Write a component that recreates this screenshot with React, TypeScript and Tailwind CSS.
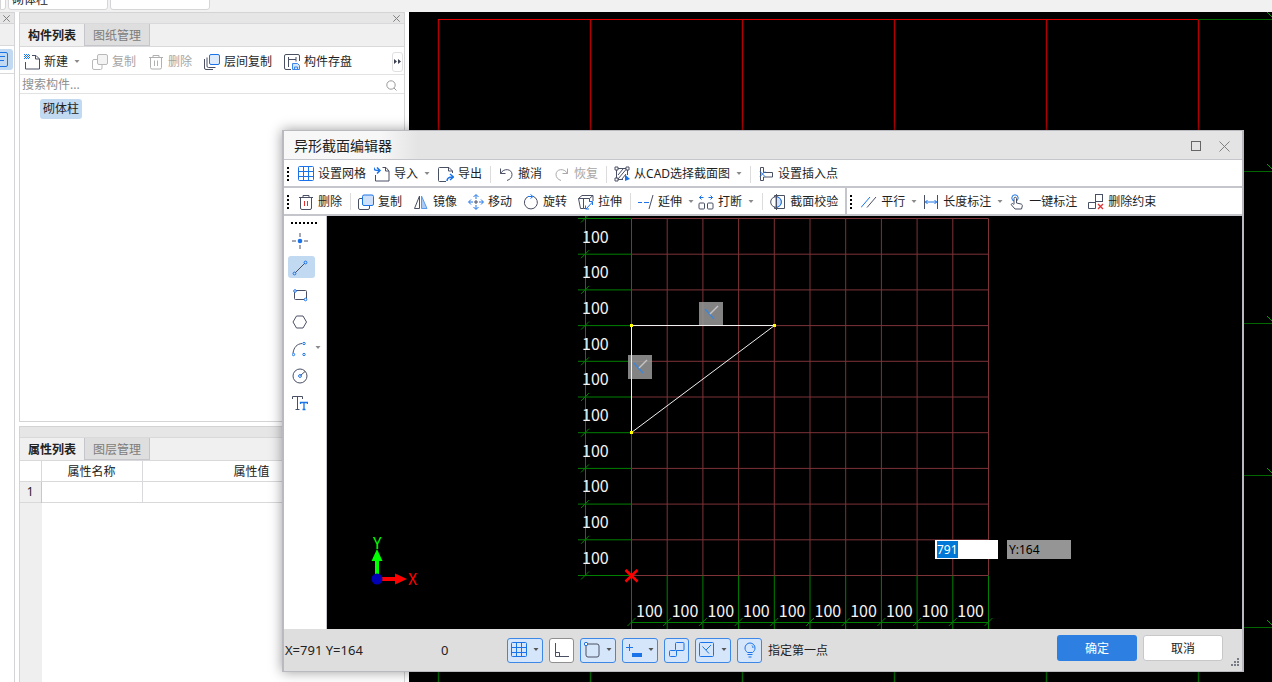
import { useEffect, useRef, type ReactNode } from "react";

const STEP = 35.7;
const cells = Array.from({ length: 10 }, (_, i) => i);
const ticks = Array.from({ length: 11 }, (_, i) => i);

const slate = "#4a5064";
const blue = "#1a73e8";

function Icon({ children, color = slate }: { children: ReactNode; color?: string }) {
  return (
    <svg width="16" height="16" viewBox="0 0 16 16" fill="none" stroke={color} className="shrink-0" aria-hidden="true">
      {children}
    </svg>
  );
}

const icons = {
  newDoc: (
    <Icon>
      <path d="M8 1.5h4l3.5 3.5v10h-14V8M11.500 1.500V5h4" />
      <path d="M0 .5h6M0 2.500h6M0 4.500h6" stroke={blue} strokeDasharray="1 1" />
      <path d="M1 1.500h5M1 3.500h5" stroke={blue} strokeDasharray="1 1" />
    </Icon>
  ),
  copyGray: (
    <Icon color="#b9b9b9">
      <path d="M5 5.500H2A1.500 1.500 0 0 0 .5 7v7A1.500 1.500 0 0 0 2 15.500h6.500A1.500 1.500 0 0 0 10 14v-3" />
      <rect x="5.500" y=".5" width="10" height="10" rx="1.500" fill="#f3f3f3" />
    </Icon>
  ),
  trashGray: (
    <Icon color="#b0b0b0">
      <path d="M1 3.500h14M5 3V1.500h6V3M2.500 4v9.500a1.500 1.500 0 0 0 1.500 1.500h8a1.500 1.500 0 0 0 1.500-1.500V4M6.500 6.500v5.500M9.500 6.500v5.500" />
    </Icon>
  ),
  trash: (
    <Icon>
      <path d="M1 3.500h14M5 3V1.500h6V3M2.500 4v10a1.500 1.500 0 0 0 1.500 1.500h8a1.500 1.500 0 0 0 1.500-1.500V4" />
      <path d="M6.500 7v5M9.500 7v5" stroke="#e03030" />
    </Icon>
  ),
  layers: (
    <Icon>
      <path d="M.5 5v9a1.500 1.500 0 0 0 1.500 1.500h7M3 3.500V12a1.500 1.500 0 0 0 1.500 1.500h7" />
      <rect x="5.500" y=".5" width="10" height="10" rx="1.500" stroke={blue} fill="#dceafc" />
    </Icon>
  ),
  store: (
    <Icon>
      <path d="M7 15.500H2A1.500 1.500 0 0 1 .5 14V2A1.500 1.500 0 0 1 2 .5h12A1.500 1.500 0 0 1 15.500 2v5M4.500 3v10M4.500 5.500H12V7.500M12 3v2.500" />
      <path d="M8.500 9.500h5l2 2v4h-7z" stroke="#3b86ea" fill="#d6e7fc" />
      <path d="M10.500 15v-2h3v2" stroke="#3b86ea" />
    </Icon>
  ),
  grid: (
    <Icon color={blue}>
      <rect x=".5" y=".5" width="15" height="14" rx="1" />
      <path d="M5.500 1v14M10.500 1v14M.5 5.500h15M.5 10.500h15" />
    </Icon>
  ),
  importIcon: (
    <Icon>
      <path d="M8.500 1.500H12l3 3.500v10H1.500V9M11.500 1.500V5H15" />
      <path d="M0 1.500c0 3 2 3 5 3M3 1.500l3 3-3 3" stroke={blue} strokeWidth="1.500" />
    </Icon>
  ),
  exportIcon: (
    <Icon>
      <path d="M8 15.500H1.500A1 1 0 0 1 .5 14.500v-12a1 1 0 0 1 1-1H11L14.500 5v2M10.500 1.500V5h4" />
      <path d="M9 15c0-3 2-4 5.500-4M12 8l3.500 3-3.500 3" stroke={blue} strokeWidth="1.500" />
    </Icon>
  ),
  undo: (
    <Icon>
      <path d="M2.500 2.500v5h5M2.500 7.500C6 1.500 14 3 14 8.500c0 3-2 5-5 6" />
    </Icon>
  ),
  redo: (
    <Icon color="#a9a9a9">
      <path d="M13.500 2.500v5h-5M13.500 7.500C10 1.500 2 3 2 8.500c0 3 2 5 5 6" />
    </Icon>
  ),
  cad: (
    <Icon>
      <path d="M2.500 2.500h11M2.500 2.500v11M13.500 2.500V9M2.500 13.500H9" />
      <path d="M1 1h3v3H1zM12 1h3v3h-3zM1 12h3v3H1z" fill="#fff" />
      <path d="M4 9l5-6M4 13l8-9.500M8 13l4-5" />
      <path d="M11 8.500l5 4.500-5 2z" stroke="none" fill={blue} />
    </Icon>
  ),
  insertPoint: (
    <Icon>
      <path d="M4 1.500H2.500v13H5.500v-3.500H14.500V6.500H5.500v-5H4" />
      <path d="M2 5.500l5 5M7 5.500l-5 5" stroke={blue} />
    </Icon>
  ),
  copyBlue: (
    <Icon>
      <path d="M5 4.500H2A1.500 1.500 0 0 0 .5 6v8A1.500 1.500 0 0 0 2 15.500h8a1.500 1.500 0 0 0 1.500-1.500v-2" />
      <rect x="4.500" y="1" width="11" height="10.500" rx="1.500" stroke={blue} fill="#cfe1fa" />
    </Icon>
  ),
  mirror: (
    <Icon>
      <path d="M6.500 2v12.500H1.500z" />
      <path d="M8.500 2v12.500H14z" stroke="#5b9bea" fill="#a9cbf6" />
    </Icon>
  ),
  move: (
    <Icon color={blue}>
      <path d="M8 1v4M8 11v4M1 8h4M11 8h4" />
      <path d="M8 6v4M6 8h4" stroke={slate} />
      <path d="M5.500 3L8 .5 10.500 3M5.500 13L8 15.500 10.500 13M3 5.500L.5 8 3 10.500M13 5.500L15.500 8 13 10.500" />
    </Icon>
  ),
  rotate: (
    <Icon>
      <path d="M10 2.300a6.500 6.500 0 1 1-4.500.1" />
      <path d="M5 2.500h4M7.500 .5l2.500 2-2.500 2" stroke={blue} />
    </Icon>
  ),
  stretch: (
    <Icon>
      <path d="M.5 4.500L4 1.500h11l-3.500 3zM.5 4.500l2 10h3V4.500M11.500 4.500V7M15 1.500V7M5.500 14.500h2" />
      <path d="M8 15l6.500-7M11 7.500h3.500V11M7.500 11.500V15H11" stroke={blue} />
    </Icon>
  ),
  extend: (
    <Icon>
      <path d="M0 8.500h4M6 8.500h5" stroke={blue} />
      <path d="M11 15l4-14" />
    </Icon>
  ),
  breakIcon: (
    <Icon>
      <rect x="1" y="9" width="5.500" height="6" rx="1" />
      <rect x="9.500" y="9" width="5.500" height="6" rx="1" />
      <path d="M1.500 3.500h4M3.500 1.500l-2 2 2 2M14.500 3.500h-4M12.500 1.500l2 2-2 2" stroke={blue} />
    </Icon>
  ),
  verify: (
    <Icon>
      <path d="M4.500 12.500v2h10v-13h-10v2" />
      <circle cx="6" cy="8" r="5.300" fill="#fff" />
      <path d="M6 2.700a5.300 5.300 0 0 1 0 10.600z" stroke={blue} fill="#cfe1fa" />
      <path d="M6.500 0v16" />
    </Icon>
  ),
  parallel: (
    <Icon>
      <path d="M0 13.500L9 3" stroke={blue} />
      <path d="M6 13.500L15 3" />
    </Icon>
  ),
  length: (
    <Icon>
      <path d="M1.500 1v14M14.500 1v14" />
      <path d="M2 8h12M4.500 6L2.500 8l2 2M11.500 6l2 2-2 2" stroke={blue} />
    </Icon>
  ),
  touch: (
    <Icon>
      <circle cx="6" cy="4" r="3.200" stroke={blue} />
      <path d="M5 10V4.500a1.200 1.200 0 0 1 2.500 0V9l4.500 1c1 .3 1.500 1 1.300 2L12.500 15H6L2.500 11c-.8-1 .8-2 1.500-1.200l1 1" fill="#fff" />
    </Icon>
  ),
  delConstraint: (
    <Icon>
      <rect x="7.500" y=".5" width="7" height="7" />
      <path d="M8 8.500H.5v6h7V8" />
      <path d="M10 10l5 5M15 10l-5 5" stroke="#e03030" strokeWidth="1.300" />
    </Icon>
  ),
  point: (
    <Icon>
      <path d="M8 0v4M8 12v4M0 8h4M12 8h4" />
      <circle cx="8" cy="8" r="2.300" fill={blue} stroke="none" />
    </Icon>
  ),
  line: (
    <Icon>
      <path d="M3 13L13 3" />
      <circle cx="2.500" cy="13.500" r="1.400" stroke={blue} />
      <circle cx="13.500" cy="2.500" r="1.400" stroke={blue} />
    </Icon>
  ),
  rect: (
    <Icon>
      <rect x="2.500" y="3.500" width="12" height="9" rx="1" />
      <circle cx="3" cy="4" r="1.300" stroke={blue} fill="#fff" />
      <circle cx="13.500" cy="12.500" r="1.300" stroke={blue} fill="#fff" />
    </Icon>
  ),
  hexagon: (
    <Icon>
      <path d="M4.500 2h6.500l3.500 6-3.500 6H4.500L1 8z" />
    </Icon>
  ),
  arc: (
    <Icon>
      <path d="M1 12C2 6 5 3 10 2.500" />
      <circle cx="1.500" cy="13.500" r="1.200" stroke={blue} />
      <circle cx="12" cy="2.500" r="1.200" stroke={blue} />
      <circle cx="12" cy="13.500" r="1.200" stroke={blue} />
    </Icon>
  ),
  circle: (
    <Icon>
      <circle cx="8" cy="8" r="7" />
      <path d="M8.500 7.500L13 3.500" />
      <circle cx="8" cy="8" r="1.400" stroke={blue} />
    </Icon>
  ),
  text: (
    <Icon>
      <path d="M.5 4V1.500h10V4M5.500 1.500v13M3.500 14.500h4" />
      <path d="M8.500 9V7.500h7V9M12 7.500v7M10.500 14.500h3" stroke={blue} strokeWidth="1.300" />
    </Icon>
  ),
  ortho: (
    <Icon>
      <path d="M1.500 1v13.500H15M1.500 10.500h4v4" />
    </Icon>
  ),
  snap: (
    <Icon>
      <rect x="2" y="2" width="13" height="13" rx="2" />
      <circle cx="2" cy="2" r="1.700" stroke={blue} fill="#fff" />
    </Icon>
  ),
  dynInput: (
    <Icon color={blue}>
      <path d="M0 5.500h7M3.500 2v7" />
      <rect x="6" y="11" width="10" height="4" fill={blue} stroke="none" />
    </Icon>
  ),
  constraint: (
    <Icon color={blue}>
      <rect x="6.500" y=".5" width="8.500" height="8" rx="1" />
      <path d="M6.500 8.500H1.500a1 1 0 0 0-1 1v4a1 1 0 0 0 1 1h5a1 1 0 0 0 1-1v-5" />
    </Icon>
  ),
  perpendicular: (
    <Icon color={blue}>
      <rect x=".5" y=".5" width="14" height="14" rx="1" />
      <path d="M3.500 4.500l6.500 7M7 8l5-5" />
    </Icon>
  ),
  bulb: (
    <Icon color={blue}>
      <path d="M5.500 10.500C4 9.500 3 8 3 6a5 5 0 0 1 10 0c0 2-1 3.500-2.500 4.500zM5.500 12.500h5M6.500 15h3M10 3.500c.8.800 1 1.500 1 2.500" />
    </Icon>
  ),
};

function Caret({ className = "text-[#8a8a8a]" }: { className?: string }) {
  return (
    <svg width="6" height="4" viewBox="0 0 6 4" className={`shrink-0 ${className}`} aria-hidden="true">
      <path d="M.5 0h5L3 3z" fill="currentColor" />
    </svg>
  );
}

function CloseX({ size = 7 }: { size?: number }) {
  return (
    <svg width={size} height={size} viewBox="0 0 7 7" stroke="#808080" aria-hidden="true">
      <path d="M.3.3l6.400 6.400M6.700.3L.3 6.700" vectorEffect="non-scaling-stroke" />
    </svg>
  );
}

interface ToolButtonProps {
  icon: ReactNode;
  label: string;
  caret?: boolean;
  disabled?: boolean;
}

function ToolButton({ icon, label, caret, disabled }: ToolButtonProps) {
  return (
    <button
      type="button"
      disabled={disabled}
      className="flex shrink-0 items-center gap-1 whitespace-nowrap text-[#1f1f1f] disabled:text-[#a6a6a6]"
    >
      {icon}
      <span>{label}</span>
      {caret && <span className="pl-0.5"><Caret /></span>}
    </button>
  );
}

function Separator() {
  return <div className="mr-[7px] ml-2 h-[17px] w-px shrink-0 bg-[#dcdcdc]" />;
}

function Grip() {
  return (
    <svg width="3" height="14" className="mr-2 shrink-0" aria-hidden="true">
      <path d="M1 0v14" stroke="#000" strokeWidth="2" strokeDasharray="2 2" />
    </svg>
  );
}

function Tabs({ active, other }: { active: string; other: string }) {
  return (
    <div className="flex h-[23px] border-b border-[#d9d9dc] bg-[#f0f0f0]">
      <button type="button" className="w-[65px] border-r border-[#c4c6cc] bg-[#f0f0f0] pt-0.5 font-bold text-[#222]">
        {active}
      </button>
      <button type="button" className="w-[65px] border-r border-b border-[#c4c6cc] bg-[#dedede] pt-0.5 text-[#7c7c7c]">
        {other}
      </button>
    </div>
  );
}

function StatusButton({ icon, label, caret, plain }: { icon: ReactNode; label: string; caret?: boolean; plain?: boolean }) {
  return (
    <button
      type="button"
      aria-label={label}
      className={`flex h-[25px] items-center rounded-[3px] border ${caret ? "w-9 justify-between pr-[3px] pl-[3px]" : "w-[25px] justify-center"} ${
        plain ? "border-[#8f8f8f] bg-white" : "border-[#3d88e6] bg-[#d5e5fa]"
      }`}
    >
      {icon}
      {caret && <Caret className="text-[#555]" />}
    </button>
  );
}

function SidePanels() {
  return (
    <aside className="flex w-[386px] shrink-0 flex-col">
      <section className="flex h-[410px] flex-col border border-[#d4d4d6] bg-white">
        <div className="flex h-[11px] items-center justify-end border-b border-[#d9d9dc] bg-[#e6e6e6] pr-1">
          <button type="button" aria-label="关闭"><CloseX /></button>
        </div>
        <Tabs active="构件列表" other="图纸管理" />
        <div className="flex h-7 items-center border-b border-[#e2e2e2] pt-0.5 pr-px pl-1">
          <div className="flex grow items-center gap-3">
            <ToolButton icon={icons.newDoc} label="新建" caret />
            <ToolButton icon={icons.copyGray} label="复制" disabled />
            <ToolButton icon={icons.trashGray} label="删除" disabled />
            <ToolButton icon={icons.layers} label="层间复制" />
            <ToolButton icon={icons.store} label="构件存盘" />
          </div>
          <button type="button" aria-label="更多" className="flex h-5 w-[11px] items-center justify-center rounded-[3px] border border-[#e0e0e0]">
            <svg width="7" height="5" viewBox="0 0 7 5" fill="#3b4052" aria-hidden="true" className="shrink-0">
              <path d="M0 0l3 2.500L0 5zM4 0l3 2.500L4 5z" />
            </svg>
          </button>
        </div>
        <div className="flex h-[19px] items-center border-b border-[#e2e2e2] pt-0.5 pr-[7px] pl-0.5">
          <input aria-label="搜索构件" placeholder="搜索构件..." className="min-w-0 grow outline-none placeholder:text-[#8f8f8f]" />
          <svg width="11" height="11" viewBox="0 0 11 11" fill="none" stroke="#9a9a9a" aria-hidden="true">
            <circle cx="5" cy="5" r="4.200" />
            <path d="M8 8l2.500 2.500" />
          </svg>
        </div>
        <div className="flex pt-[5px] pl-5">
          <button type="button" className="h-5 rounded-[3px] bg-[#c2d9f2] px-[3px] text-[#222]">砌体柱</button>
        </div>
      </section>

      <section className="mt-1 flex grow flex-col border border-b-0 border-[#d4d4d6] bg-white">
        <div className="h-[11px] border-b border-[#d9d9dc] bg-[#e6e6e6]" />
        <Tabs active="属性列表" other="图层管理" />
        <table className="w-full table-fixed border-collapse text-[#222]">
          <colgroup>
            <col className="w-[21px]" />
            <col className="w-[101px]" />
            <col className="w-[219px]" />
            <col />
          </colgroup>
          <thead>
            <tr className="h-5 border-b border-[#d9d9dc]">
              <th className="border-r border-[#d9d9dc] p-0" />
              <th className="border-r border-[#d9d9dc] p-0 pt-0.5 font-normal">属性名称</th>
              <th className="border-r border-[#d9d9dc] p-0 pt-0.5 font-normal">属性值</th>
              <th />
            </tr>
          </thead>
          <tbody>
            <tr className="h-[21px] border-b border-[#d9d9dc]">
              <td className="border-r border-[#c8c8cc] bg-[#efefef] text-center">1</td>
              <td className="border-r border-[#d9d9dc]" />
              <td className="border-r border-[#d9d9dc]" />
              <td />
            </tr>
          </tbody>
        </table>
        <div className="w-[22px] grow bg-[#efefef]" />
      </section>
    </aside>
  );
}

function MainCanvas() {
  return (
    <svg className="block h-full w-full" aria-hidden="true">
      <g stroke="#b00000">
        {ticks.slice(0, 6).map((i) => (
          <path key={i} d={`M${29.500 + i * 152} 7V300`} strokeWidth="1.500" />
        ))}
        <path d="M29 7.500H789" stroke="#e00000" />
      </g>
      <g stroke="#006a00">
        {ticks.slice(0, 6).map((i) => (
          <path key={i} d={`M${29.500 + i * 152} 400V900`} strokeWidth="1.500" />
        ))}
        {ticks.slice(0, 5).map((i) => (
          <g key={i}>
            <path d={`M789 ${7.500 + i * 152}H1600`} />
            <path d={`M858 ${i * 152}l10 10`} stroke="#00a000" />
          </g>
        ))}
      </g>
    </svg>
  );
}

function SectionDrawing() {
  const x0 = 304.500;
  const y0 = 2.500;
  const end = STEP * 10;
  return (
    <svg className="block h-full w-full" aria-label="截面">
      <g stroke="#7d3338">
        {ticks.map((i) => (
          <path key={i} d={`M${x0 + i * STEP} ${y0}v${end}M${x0} ${y0 + i * STEP}h${end}`} />
        ))}
      </g>
      <g stroke="#008000">
        {ticks.map((i) => (
          <g key={i}>
            <path d={`M251 ${y0 + i * STEP}H${x0}M${x0 + i * STEP} ${y0 + end}V420`} />
            <path d={`M254 ${y0 + i * STEP + 4}l8-8M${x0 + i * STEP - 4} 410l8-8`} />
          </g>
        ))}
        <path d={`M258.500 0V${y0 + end}M${x0} 406.500h${end}`} />
      </g>
      <g fill="#f4f4f4" className="font-['Noto_Sans_CJK_SC',sans-serif] text-base">
        {cells.map((i) => (
          <g key={i}>
            <text x="255" y={26.500 + i * STEP}>100</text>
            <text x={309 + i * STEP} y="401">100</text>
          </g>
        ))}
      </g>

      <g fill="#9a9a9a" fillOpacity=".85">
        <rect x="372" y="86" width="24" height="24" />
        <rect x="301" y="139" width="24" height="24" />
      </g>
      <path d="M304.500 109.500h143L304.500 216.500z" fill="none" stroke="#f0f0f0" />
      {[[378, 91], [307, 145]].map(([x, y]) => (
        <g key={x} fill="none" strokeWidth="1.500">
          <path d={`M${x} ${y + 2}l9 10`} stroke="#3d86d8" />
          <path d={`M${x + 5} ${y + 7}l8-8`} stroke="#c4c4c4" />
        </g>
      ))}
      <g fill="#ff0">
        <rect x="303" y="108" width="3" height="3" />
        <rect x="446" y="108" width="3" height="3" />
        <rect x="303" y="215" width="3" height="3" />
      </g>
      <path d="M298.500 354l12 11.500M310.500 354l-12 11.500" stroke="#f00" strokeWidth="2.500" />

      {/* axis marker */}
      <path d="M50 363v-20" stroke="#0f0" strokeWidth="4" />
      <path d="M44.500 345L50 333l5.500 12z" fill="#0f0" />
      <path d="M50 363h20" stroke="#f00" strokeWidth="4" />
      <path d="M68 357.500l12 5.500-12 5.500z" fill="#f00" />
      <circle cx="50" cy="363" r="5.500" fill="#0000b4" />
      <g className="font-['Noto_Sans_CJK_SC',sans-serif] text-base">
        <text x="46" y="333" fill="#0f0">Y</text>
        <text x="81" y="369" fill="#f00">X</text>
      </g>
    </svg>
  );
}

function SectionEditor() {
  const coordRef = useRef<HTMLInputElement>(null);

  useEffect(() => {
    coordRef.current?.focus();
    coordRef.current?.select();
  }, []);

  const drawTools = [
    { icon: icons.point, label: "点" },
    { icon: icons.line, label: "直线", active: true },
    { icon: icons.rect, label: "矩形" },
    { icon: icons.hexagon, label: "多边形" },
    { icon: icons.arc, label: "弧线", caret: true },
    { icon: icons.circle, label: "圆" },
    { icon: icons.text, label: "文字" },
  ];

  return (
    <div
      role="dialog"
      aria-label="异形截面编辑器"
      className="absolute top-[130px] right-7 bottom-2.5 left-[282px] flex flex-col border-2 border-t border-b border-[#b9babf] bg-white shadow-[0_0_12px_rgba(0,0,0,0.4)]"
    >
      <header className="flex h-7 shrink-0 items-center justify-between bg-[#e4e4e4] bg-linear-to-r from-[#f7f7f7] from-10% to-[#e4e4e4] to-14% pt-0.5 pr-3 pl-2.5">
        <h1 className="text-sm text-[#222]">异形截面编辑器</h1>
        <div className="flex items-center gap-[18px]">
          <button type="button" aria-label="最大化" className="size-2.5 border border-[#666]" />
          <button type="button" aria-label="关闭"><CloseX size={11} /></button>
        </div>
      </header>

      <div className="flex h-[29px] shrink-0 items-center border-t border-b-2 border-[#c4c6cc] pt-0.5 pl-[3px]">
        <Grip />
        <div className="flex gap-2">
          <ToolButton icon={icons.grid} label="设置网格" />
          <ToolButton icon={icons.importIcon} label="导入" caret />
          <ToolButton icon={icons.exportIcon} label="导出" />
        </div>
        <Separator />
        <div className="flex gap-3">
          <ToolButton icon={icons.undo} label="撤消" />
          <ToolButton icon={icons.redo} label="恢复" disabled />
        </div>
        <Separator />
        <ToolButton icon={icons.cad} label="从CAD选择截面图" caret />
        <Separator />
        <ToolButton icon={icons.insertPoint} label="设置插入点" />
      </div>

      <div className="flex h-7 shrink-0 border-b-2 border-[#c4c6cc]">
        <div className="flex items-center border-r-2 border-[#c4c6cc] pt-px pr-[7px] pl-[3px]">
          <Grip />
          <ToolButton icon={icons.trash} label="删除" />
          <Separator />
          <div className="flex gap-[11px]">
            <ToolButton icon={icons.copyBlue} label="复制" />
            <ToolButton icon={icons.mirror} label="镜像" />
            <ToolButton icon={icons.move} label="移动" />
            <ToolButton icon={icons.rotate} label="旋转" />
            <ToolButton icon={icons.stretch} label="拉伸" />
          </div>
          <Separator />
          <div className="flex gap-1">
            <ToolButton icon={icons.extend} label="延伸" caret />
            <ToolButton icon={icons.breakIcon} label="打断" caret />
          </div>
          <Separator />
          <ToolButton icon={icons.verify} label="截面校验" />
        </div>
        <div className="flex items-center pt-px pl-[3px]">
          <Grip />
          <div className="flex gap-1.5">
            <ToolButton icon={icons.parallel} label="平行" caret />
            <ToolButton icon={icons.length} label="长度标注" caret />
            <div className="flex gap-[11px]">
              <ToolButton icon={icons.touch} label="一键标注" />
              <ToolButton icon={icons.delConstraint} label="删除约束" />
            </div>
          </div>
        </div>
      </div>

      <div className="flex min-h-0 grow">
        <div className="flex w-[43px] shrink-0 flex-col gap-[5px] border-r border-[#c4c6cc] pt-1.5 pl-1">
          <svg width="27" height="2" className="ml-[3px] shrink-0" aria-hidden="true">
            <path d="M0 1h27" stroke="#000" strokeWidth="2" strokeDasharray="2 2" />
          </svg>
          {drawTools.map((tool) => (
            <div key={tool.label} className="flex items-center">
              <button
                type="button"
                aria-label={tool.label}
                className={`flex h-[22px] w-[27px] shrink-0 items-center pt-px pl-1 ${tool.active ? "rounded-[3px] bg-[#c2d9f2]" : ""}`}
              >
                {tool.icon}
              </button>
              {tool.caret && <Caret />}
            </div>
          ))}
        </div>
        <div className="relative min-w-0 grow overflow-hidden bg-black">
          <SectionDrawing />
          <input
            ref={coordRef}
            aria-label="X"
            defaultValue="791"
            className="absolute top-[324px] left-[608px] h-[19px] w-[63px] bg-white px-0.5 text-black outline-none selection:bg-[#0078d7] selection:text-white"
          />
          <div className="absolute top-[324px] left-[680px] h-[19px] w-16 bg-[#959595] px-0.5 leading-[19px] text-black">Y:164</div>
        </div>
      </div>

      <footer className="flex h-[42px] shrink-0 items-center bg-[#dededf] text-[#222]">
        <span className="w-[157px] shrink-0 pl-px text-[13px]">X=791 Y=164</span>
        <span className="w-[66px] shrink-0 text-[13px]">0</span>
        <div className="flex items-center gap-1.5">
          <StatusButton icon={icons.grid} label="网格" caret />
          <StatusButton icon={icons.ortho} label="正交" plain />
          <StatusButton icon={icons.snap} label="捕捉" caret />
          <StatusButton icon={icons.dynInput} label="动态输入" caret />
          <StatusButton icon={icons.constraint} label="约束" />
          <StatusButton icon={icons.perpendicular} label="自动约束" caret />
          <StatusButton icon={icons.bulb} label="提示" />
          <span className="pt-0.5">指定第一点</span>
        </div>
        <div className="ml-auto flex gap-1.5 pb-1">
          <button type="button" className="h-[26px] w-20 rounded-[3px] bg-[#2d80e2] pt-0.5 text-white">确定</button>
          <button type="button" className="h-[26px] w-20 rounded-[3px] border border-[#c8c8ca] bg-white pt-0.5">取消</button>
        </div>
        <svg width="9" height="9" fill="#777b85" className="mr-0.5 mb-1 ml-2 shrink-0 self-end" aria-hidden="true">
          <path d="M6 0h2v2H6zM3 3h2v2H3zM6 3h2v2H6zM0 6h2v2H0zM3 6h2v2H3zM6 6h2v2H6z" />
        </svg>
      </footer>
    </div>
  );
}

export default function App() {
  return (
    <div className="relative flex h-screen flex-col overflow-hidden bg-white font-['Noto_Sans','Noto_Sans_CJK_SC',sans-serif] text-xs leading-4">
      <div className="flex h-3 shrink-0 items-end gap-0.5 overflow-hidden bg-[#f1f1f1] pb-0.5">
        <div className="h-[22px] w-1.5 rounded-br-[3px] border border-[#d6d6d8] bg-white" />
        <input aria-label="构件类型" defaultValue="砌体柱" className="h-[22px] w-[100px] rounded-[3px] border border-[#d6d6d8] bg-white px-[3px] text-[#222]" />
        <input aria-label="构件" className="h-[22px] w-[100px] rounded-[3px] border border-[#d6d6d8] bg-white px-[3px]" />
      </div>
      <div className="flex min-h-0 grow">
        <div className="mr-1 w-[15px] shrink-0 border-r border-[#d4d4d6]">
          <div className="flex h-3 items-center justify-end border-t border-b border-[#d4d4d6] bg-[#e6e6e6] pr-1">
            <button type="button" aria-label="关闭"><CloseX /></button>
          </div>
          <div className="h-[22px] border-b border-[#d9d9dc] bg-[#f0f0f0]" />
          <div className="border-b border-[#d9d9dc] py-[3px]">
            <button type="button" aria-label="构件" className="flex h-[21px] w-[13px] items-center rounded-r-[3px] bg-[#c2d9f2]">
              <svg width="8" height="15" viewBox="0 0 8 15" fill="none" stroke={blue} aria-hidden="true">
                <path d="M0 .5h6A1.500 1.500 0 0 1 7.500 2v11A1.500 1.500 0 0 1 6 14.500H0M0 4.500h5M0 8.500h4" />
              </svg>
            </button>
          </div>
        </div>
        <SidePanels />
        <main className="ml-1 min-w-0 grow overflow-hidden bg-black">
          <MainCanvas />
        </main>
      </div>
      <SectionEditor />
    </div>
  );
}
